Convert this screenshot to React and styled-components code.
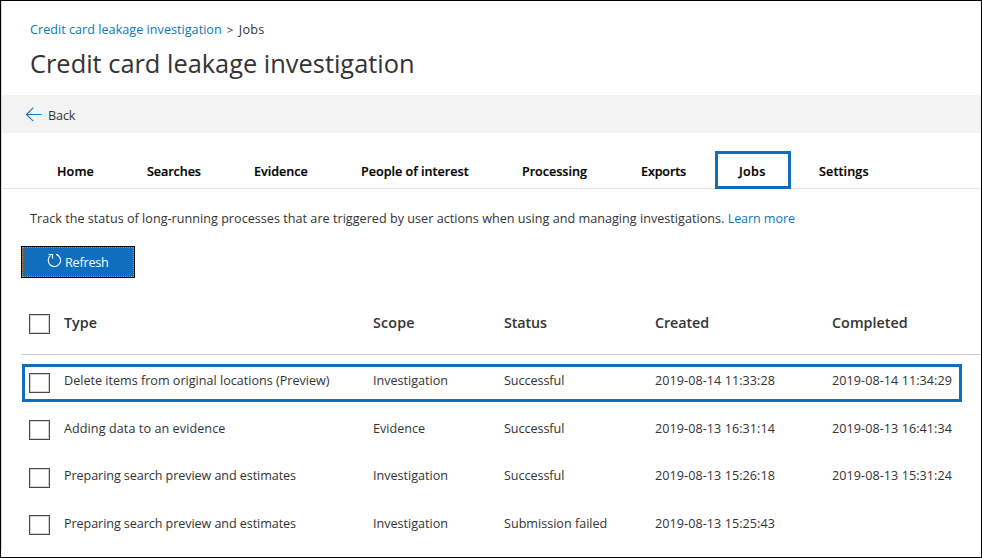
import React from "react";
import styled, { createGlobalStyle, css } from "styled-components";

const GlobalStyle = createGlobalStyle`
  *, *::before, *::after { box-sizing: border-box; }
  body { margin: 0; background: #fff; }
`;

const Frame = styled.main`
  width: 982px;
  height: 558px;
  border: 1px solid #000;
  display: flex;
  flex-direction: column;
  overflow: hidden;
  background: linear-gradient(#d9d9d9, #d9d9d9) 0 0 / 1px 549px no-repeat #fff;
  color: #333;
  font-family: "Open Sans", "Noto Sans", sans-serif;
  font-size: 12.6px;
  line-height: 18px;
  white-space: nowrap;
`;

const Text = styled.span`
  letter-spacing: ${({ $track = 0 }) => $track}px;
`;

const Link = styled.a`
  color: #0a77ba;
  text-decoration: none;
  letter-spacing: ${({ $track = 0 }) => $track}px;
`;

const PageHeader = styled.header`
  height: 94px;
  padding: 20px 0 0 29px;
`;

const Breadcrumb = styled.nav`
  display: flex;
  height: 18px;
`;

const Separator = styled.span`
  width: 17px;
  padding-left: 5px;
  font-size: 11.5px;
`;

const Title = styled.h1`
  margin: 6px 0 0;
  font-size: 25.4px;
  font-weight: 400;
  line-height: 36px;
`;

const CommandBar = styled.div`
  height: 38px;
  margin-left: 1px;
  padding: 3px 0 0 23px;
  display: flex;
  align-items: center;
  background: #f3f3f3;
`;

const BackButton = styled.button`
  display: flex;
  align-items: center;
  gap: 6px;
  padding: 1px 0 0;
  border: 0;
  background: none;
  color: inherit;
  font: inherit;

  svg { margin-top: -4px; }
`;

const Tabs = styled.nav`
  display: grid;
  grid-template-columns: 90px 107px 107px 161px 119px 74px 104px 100px;
  height: 56px;
  margin-left: 1px;
  padding: 18px 0 0 55px;
  border-bottom: 1px solid #e5e5e5;
`;

const Tab = styled.a`
  height: 38px;
  padding-top: 12px;
  color: #000;
  font-weight: 600;
  -webkit-text-stroke: 0.2px #000;
  letter-spacing: ${({ $track = 0 }) => $track}px;
  ${({ $selected }) => $selected && css`
    width: 76px;
    padding: 9px 0 0 21px;
    border: 3px solid #106ebe;
  `}
`;

const Intro = styled.p`
  margin: 21px 0 0 29px;
  height: 36px;
`;

const RefreshButton = styled.button`
  width: 114px;
  height: 32px;
  margin-left: 20px;
  padding: 2px 0 0 25px;
  display: flex;
  align-items: center;
  gap: 3px;
  border: 1px solid #000;
  outline: 1px dotted #c58a55;
  outline-offset: -2px;
  background: #106ebe;
  color: #fff;
  font: inherit;

  svg { margin-top: -5px; }
`;

const JobTable = styled.section`
  margin-left: 20px;
  display: flex;
  flex-direction: column;
`;

const columns = css`
  display: grid;
  grid-template-columns: 34px 309px 131px 151px 177px 1fr;
`;

const TableHeader = styled.div`
  ${columns}
  height: 77px;
  padding: 36px 0 0 9px;
  border-bottom: 1px solid #c8c8c8;
  font-size: 14.3px;
  font-weight: 600;
`;

const TableBody = styled.div`
  padding-top: 9px;
  display: grid;
  grid-template-rows: 48px 47px 48px 47px;
`;

const JobRow = styled.div`
  ${columns}
  height: 38px;
  width: 940px;
  margin-left: 1px;
  padding: 8px 0 0 8px;
  box-shadow: ${({ $highlighted }) => ($highlighted ? "inset 0 0 0 3px #106ebe" : "none")};
`;

const Checkbox = styled.input.attrs({ type: "checkbox" })`
  appearance: none;
  width: 21px;
  height: 20px;
  margin: ${({ $top = 0 }) => $top}px 0 0 -1px;
  border: 1px solid #484848;
  box-shadow: inset 0 0 0 1px #d4d4d4;
  background: #fff;
`;

const ArrowLeft = () => (
  <svg width="17" height="16" viewBox="0 0 17 16" fill="none" stroke="#1777c9" strokeWidth="1.1">
    <path d="M16.5 8.5H1.7M8.3 1.6L1.4 8.5L8.3 15.2" />
  </svg>
);

const RefreshIcon = () => (
  <svg width="15" height="15" viewBox="0 0 15 15" fill="none" stroke="#fff" strokeWidth="1.1">
    <path d="M9.2 1.4A6.2 6.2 0 1 1 3.6 2.4M1.6 1.5H5.5V5.4" />
  </svg>
);

const tabs = [
  { label: "Home", track: 0.15 },
  { label: "Searches", track: -0.08 },
  { label: "Evidence", track: 0 },
  { label: "People of interest", track: 0 },
  { label: "Processing", track: -0.03 },
  { label: "Exports", track: -0.15 },
  { label: "Jobs", track: 0.3, selected: true },
  { label: "Settings", track: 0.12 },
];

const headings = [
  ["Type", 0],
  ["Scope", 0.15],
  ["Status", -0.1],
  ["Created", -0.08],
  ["Completed", 0.05],
];

const jobs = [
  { type: "Delete items from original locations (Preview)", track: 0, scope: "Investigation", status: "Successful", created: "2019-08-14 11:33:28", completed: "2019-08-14 11:34:29", highlighted: true, boxTop: 1 },
  { type: "Adding data to an evidence", track: 0.08, scope: "Evidence", status: "Successful", created: "2019-08-13 16:31:14", completed: "2019-08-13 16:41:34", boxTop: 0 },
  { type: "Preparing search preview and estimates", track: -0.08, scope: "Investigation", status: "Successful", created: "2019-08-13 15:26:18", completed: "2019-08-13 15:31:24", boxTop: 1 },
  { type: "Preparing search preview and estimates", track: -0.08, scope: "Investigation", status: "Submission failed", created: "2019-08-13 15:25:43", completed: "", boxTop: 0 },
];

export default function App() {
  return (
    <>
      <GlobalStyle />
      <Frame>
        <PageHeader>
          <Breadcrumb>
            <Link $track={0.03}>Credit card leakage investigation</Link>
            <Separator>&gt;</Separator>
            <Text $track={0.3}>Jobs</Text>
          </Breadcrumb>
          <Title>Credit card leakage investigation</Title>
        </PageHeader>
        <CommandBar>
          <BackButton>
            <ArrowLeft />
            <Text $track={-0.1}>Back</Text>
          </BackButton>
        </CommandBar>
        <Tabs>
          {tabs.map((tab) => (
            <Tab key={tab.label} $track={tab.track} $selected={tab.selected}>{tab.label}</Tab>
          ))}
        </Tabs>
        <Intro>
          <Text $track={0.025}>Track the status of long-running processes that are triggered by user actions when using and managing investigations. </Text>
          <Link $track={-0.1}>Learn more</Link>
        </Intro>
        <RefreshButton>
          <RefreshIcon />
          <Text $track={-0.2}>Refresh</Text>
        </RefreshButton>
        <JobTable>
          <TableHeader>
            <Checkbox $top={0} aria-label="Select all jobs" />
            {headings.map(([label, track]) => (
              <Text key={label} $track={track}>{label}</Text>
            ))}
          </TableHeader>
          <TableBody>
            {jobs.map((job) => (
              <JobRow key={job.created} $highlighted={job.highlighted}>
                <Checkbox $top={job.boxTop} aria-label={job.type} />
                <Text $track={job.track}>{job.type}</Text>
                <Text $track={0}>{job.scope}</Text>
                <Text $track={job.status === "Successful" ? -0.06 : 0}>{job.status}</Text>
                <Text $track={0.06}>{job.created}</Text>
                <Text $track={0.06}>{job.completed}</Text>
              </JobRow>
            ))}
          </TableBody>
        </JobTable>
      </Frame>
    </>
  );
}
